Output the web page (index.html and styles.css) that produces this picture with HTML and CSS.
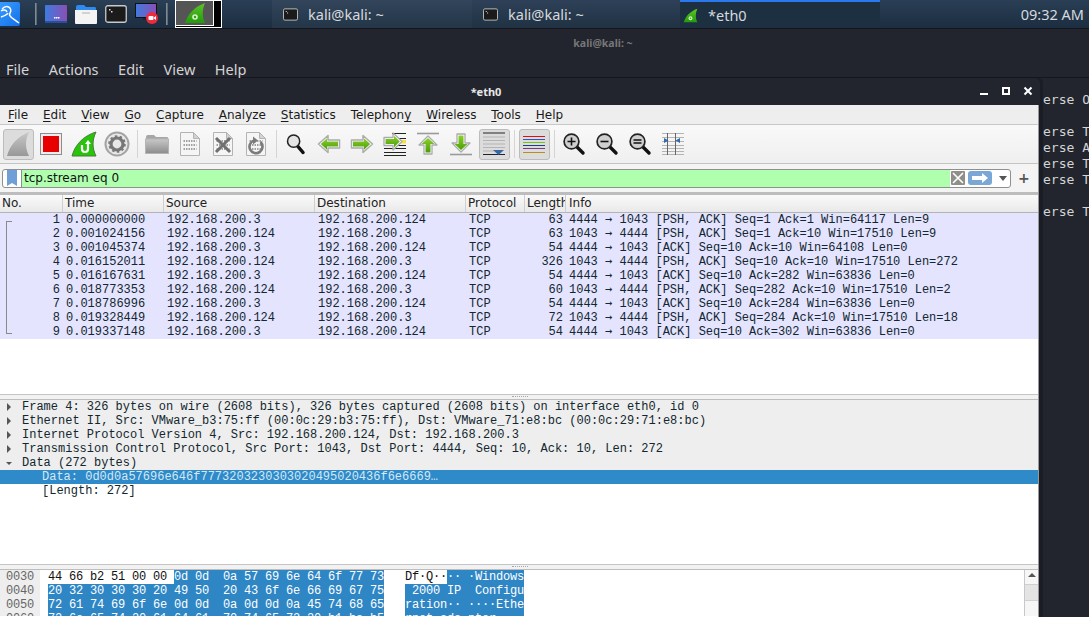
FILE: index.html
```html
<!DOCTYPE html>
<html lang="en">
<head>
    <meta charset="UTF-8">
    <title>*eth0</title>
    <link rel="stylesheet" href="styles.css">
</head>
<body>
<svg class="defs" width="0" height="0">
    <defs>
        <linearGradient id="fin" x1="0" y1="0" x2="0" y2="1"><stop offset="0" stop-color="#c8c8c8"/><stop offset="1" stop-color="#989898"/></linearGradient>
        <linearGradient id="green" x1="0" y1="0" x2="0" y2="1"><stop offset="0" stop-color="#8ed02e"/><stop offset="1" stop-color="#4a9e08"/></linearGradient>
        <linearGradient id="fold" x1="0" y1="0" x2="0" y2="1"><stop offset="0" stop-color="#c8c8c8"/><stop offset="1" stop-color="#8c8c8c"/></linearGradient>
        <linearGradient id="screen" x1="0" y1="0" x2="1" y2="0"><stop offset="0" stop-color="#3f7be0"/><stop offset="1" stop-color="#8a4fb5"/></linearGradient>
        <linearGradient id="kali" x1="0" y1="0" x2="1" y2="1"><stop offset="0" stop-color="#3aa0ff"/><stop offset="1" stop-color="#1470e8"/></linearGradient>
        <linearGradient id="wsgreen" x1="0" y1="0" x2="0" y2="1"><stop offset="0" stop-color="#5cc62a"/><stop offset="1" stop-color="#239a0a"/></linearGradient>
        <symbol id="arrow" viewBox="0 0 24 20"><path d="M1.500 10 11 1.500V6h11.500v8H11v4.500z" fill="#fff" stroke="#ababab" stroke-width="1.500" stroke-linejoin="round"/><path d="M3.800 10 10 4.300V7.500h11v5H10v3.200z" fill="url(#green)"/></symbol>
        <symbol id="lens" viewBox="0 0 24 24"><path d="M14 14 21 21" stroke="#111" stroke-width="3.400" stroke-linecap="round"/><circle cx="9.500" cy="9.500" r="7.400" fill="#cfcfcf" stroke="#222" stroke-width="1.700"/></symbol>
        <symbol id="page" viewBox="0 0 24 24"><path d="M2.500 .5h13l6 6v17h-19z" fill="#f5f5f5" stroke="#b4b4b4"/><path d="M15.500 .5v6h6z" fill="#d2d2d2" stroke="#b4b4b4"/><path d="M5.500 9h13M5.500 13h13M5.500 17h13" stroke="#a0a0a0" stroke-width="2" stroke-dasharray="1.500 1"/></symbol>
        <symbol id="term" viewBox="0 0 22 18"><rect x=".75" y=".75" width="20.500" height="16.500" rx="2" fill="#1b1b1b" stroke="#c9c9c9" stroke-width="1.300"/><path d="M4 4h1.500v1.500H4zM6 6h1.500v1.500H6z" fill="#ddd"/></symbol>
        <symbol id="wsfin" viewBox="0 0 22 22"><path d="M1 21C4 12 10 5 21 1c-3 7-3 14 0 20z" fill="url(#wsgreen)"/><circle cx="11" cy="15" r="2.800" fill="#d5f2c8"/><circle cx="11" cy="15" r="1.200" fill="#3d9a1c"/></symbol>
    </defs>
</svg>

<div class="desktop">
    <div class="taskbar">
        <div class="launchers">
            <svg class="kali" width="20" height="24" viewBox="0 0 20 24"><rect x="-4" y="0" width="24" height="24" rx="2" fill="url(#kali)"/><path d="M2 7C7 2 13 6 10 11 8 14 12 16 19 21M1 9c3-2 5-1 6 1M1 15c3-1 6-2 7-4" fill="none" stroke="#fff" stroke-width="1.500"/></svg>
            <span class="launch-sep"></span>
            <svg class="launcher" width="22" height="18" viewBox="0 0 22 18"><rect width="22" height="18" rx="1" fill="url(#screen)"/><rect y="16" width="22" height="2" fill="#2b4e9a"/><path d="M9 12h1.500v1.500H9zM11 12h1.500v1.500H11zM13 12h1.500v1.500H13z" fill="#fff"/></svg>
            <svg class="launcher" width="22" height="20" viewBox="0 0 22 20"><path d="M1 3q0-2 2-2h6l2 2h9q1 0 1 2v3H1z" fill="#2f8af0"/><path d="M0 6h22v13q0 1-1 1H1q-1 0-1-1z" fill="#f4f4f4"/><path d="M7 9h8" stroke="#bbb" stroke-width="1.200"/></svg>
            <svg class="launcher" width="22" height="18"><use href="#term"/></svg>
            <svg class="launcher" width="24" height="22" viewBox="0 0 24 22"><rect x=".5" y=".5" width="21" height="14" fill="url(#screen)" stroke="#111"/><path d="M8 15h6v2H8z" fill="#222"/><circle cx="17" cy="15" r="6" fill="#ee2b3c"/><rect x="13.500" y="13" width="5" height="4" rx="1" fill="#fff"/><path d="M19 14.500 21 13v4l-2-1.500z" fill="#fff"/></svg>
            <span class="launch-sep"></span>
        </div>
        <div class="preview"><div class="preview-thumb"><svg width="22" height="22"><use href="#wsfin"/></svg></div></div>
        <div class="task task-first"><svg width="15" height="13"><use href="#term"/></svg>kali@kali: ~</div>
        <div class="task task-second"><svg width="15" height="13"><use href="#term"/></svg>kali@kali: ~</div>
        <div class="task task-active"><svg width="15" height="17"><use href="#wsfin"/></svg>*eth0</div>
        <div class="clock">09:32 AM</div>
    </div>

    <div class="terminal">
        <div class="term-title">kali@kali: ~</div>
        <div class="term-menu"><span>File</span><span>Actions</span><span>Edit</span><span>View</span><span>Help</span></div>
        <pre class="term-output">erse O

erse T
erse A
erse T
erse T

erse T</pre>
    </div>

    <div class="wireshark">
        <div class="ws-title">
            <span class="ws-title-text">*eth0</span>
            <div class="ws-controls">
                <svg width="10" height="10" viewBox="0 0 10 10"><rect x="1" y="7" width="8" height="2" fill="#fff"/></svg>
                <svg width="10" height="10" viewBox="0 0 10 10"><rect x="2" y="2" width="6" height="6" fill="none" stroke="#fff" stroke-width="2"/></svg>
                <svg width="10" height="10" viewBox="0 0 10 10"><path d="M1.500 1.500 8.500 8.500M8.500 1.500 1.500 8.500" stroke="#fff" stroke-width="2"/></svg>
            </div>
        </div>
        <div class="ws-body">
            <div class="menubar">
                <span><u>F</u>ile</span><span><u>E</u>dit</span><span><u>V</u>iew</span><span><u>G</u>o</span><span><u>C</u>apture</span><span><u>A</u>nalyze</span><span><u>S</u>tatistics</span><span>Telephon<u>y</u></span><span><u>W</u>ireless</span><span><u>T</u>ools</span><span><u>H</u>elp</span>
            </div>

            <div class="toolbar">
                <span class="tool tool-on"><svg width="24" height="26" viewBox="0 0 24 26"><path d="M1 25C4 14 11 6 23 1c-4 8-4 16 0 24z" fill="url(#fin)"/></svg></span>
                <span class="tool"><svg width="22" height="22" viewBox="0 0 22 22"><rect x=".5" y=".5" width="21" height="21" fill="#eee" stroke="#8c8c8c"/><rect x="3" y="3" width="16" height="16" fill="#e60000"/></svg></span>
                <span class="tool"><svg width="26" height="26" viewBox="0 0 26 26"><path d="M1 25C4 14 12 5 25 1c-4 8-4 16 0 24z" fill="#27c40a" stroke="#4b7a3c"/><path d="M11 14v4q0 3 3 3t3-3v-6" fill="none" stroke="#fff" stroke-width="2.200"/><path d="M14 13l3-4 3 4z" fill="#fff"/></svg></span>
                <span class="tool"><svg width="26" height="26" viewBox="0 0 26 26"><circle cx="13" cy="13" r="11.500" fill="#e8e8e8" stroke="#a4a4a4" stroke-width="2"/><circle cx="13" cy="13" r="6" fill="none" stroke="#777" stroke-width="3.200"/><circle cx="13" cy="13" r="7.800" fill="none" stroke="#777" stroke-width="2" stroke-dasharray="2.500 2.400"/></svg></span>
                <span class="tool-sep"></span>
                <span class="tool"><svg width="24" height="20" viewBox="0 0 24 20"><path d="M1 3q0-2 2-2h6l2 2h11q1 0 1 1v2H1z" fill="#a6a6a6"/><rect x=".5" y="5" width="23" height="14.500" fill="url(#fold)" stroke="#b5b5b5"/></svg></span>
                <span class="tool"><svg width="24" height="24"><use href="#page"/></svg></span>
                <span class="tool"><svg width="24" height="24" viewBox="0 0 24 24"><use href="#page" width="24" height="24"/><path d="M5 6 19 20M19 6 5 20" stroke="#707070" stroke-width="3"/></svg></span>
                <span class="tool"><svg width="24" height="24" viewBox="0 0 24 24"><use href="#page" width="24" height="24"/><path d="M16.500 10A6.500 6.500 0 1 1 10 8.500" fill="none" stroke="#7b7b7b" stroke-width="2.600"/><path d="M9 4.500 14 8.500 9 12.500z" fill="#7b7b7b"/></svg></span>
                <span class="tool-sep"></span>
                <span class="tool"><svg width="20" height="22" viewBox="0 0 21 22"><path d="M12 13 18 20" stroke="#111" stroke-width="3.400" stroke-linecap="round"/><circle cx="8" cy="8" r="6.400" fill="#e4e4e4" stroke="#222" stroke-width="1.600"/></svg></span>
                <span class="tool"><svg width="24" height="20"><use href="#arrow"/></svg></span>
                <span class="tool"><svg class="flip" width="24" height="20"><use href="#arrow"/></svg></span>
                <span class="tool"><svg width="24" height="24" viewBox="0 0 24 24"><path d="M9 1.500h14M16 6.500h7M1 16.500h22M1 20.500h22M1 23.500h22M12 13.500h11" stroke="#222"/><path d="M14 8h9v3.500h-9z" fill="#f2e24a"/><path d="M19 9.500 10 1v4.500H1v8h9V18z" fill="#fff" stroke="#ababab" stroke-width="1.300" stroke-linejoin="round"/><path d="M16.800 9.500 11 3.800v3.200H2.500v5H11v3.200z" fill="url(#green)"/></svg></span>
                <span class="tool"><svg width="24" height="24" viewBox="0 0 24 24"><path d="M1 1.500h22" stroke="#9a9a9a" stroke-width="1.600"/><path d="M12 4 21 13h-5v9H8v-9H3z" fill="#fff" stroke="#ababab" stroke-width="1.300" stroke-linejoin="round"/><path d="M12 6 18.500 12H14.500v8.500h-5V12H5.500z" fill="url(#green)"/></svg></span>
                <span class="tool"><svg width="24" height="24" viewBox="0 0 24 24"><path d="M1 22.500h22" stroke="#9a9a9a" stroke-width="1.600"/><path d="M12 20 3 11h5V2h8v9h5z" fill="#fff" stroke="#ababab" stroke-width="1.300" stroke-linejoin="round"/><path d="M12 18 5.500 12H9.500V3.500h5V12H18.500z" fill="url(#green)"/></svg></span>
                <span class="tool tool-on"><svg width="24" height="24" viewBox="0 0 24 24"><path d="M1 1h22M1 22.500h22" stroke="#222" stroke-width="1.200"/><path d="M1 5h22M1 8.500h22M1 12h22M1 15.500h22M1 19h11" stroke="#b4b4b4"/><path d="M11 18h11l-5.500 5z" fill="#3667a8"/></svg></span>
                <span class="tool-sep"></span>
                <span class="tool tool-on"><svg width="24" height="24" viewBox="0 0 24 24"><path d="M1 4.500h22" stroke="#e01010"/><path d="M1 7.500h22" stroke="#2a56c8"/><path d="M1 10.500h22" stroke="#70c810"/><path d="M1 13.500h22" stroke="#1d3f8a"/><path d="M1 16.500h22" stroke="#7a3a8a"/><path d="M1 20.500h22" stroke="#b89018"/></svg></span>
                <span class="tool-sep"></span>
                <span class="tool"><svg width="24" height="24" viewBox="0 0 24 24"><use href="#lens" width="24" height="24"/><path d="M5.500 9.500h8M9.500 5.500v8" stroke="#111" stroke-width="1.600"/></svg></span>
                <span class="tool"><svg width="24" height="24" viewBox="0 0 24 24"><use href="#lens" width="24" height="24"/><path d="M5.500 9.500h8" stroke="#111" stroke-width="1.600"/></svg></span>
                <span class="tool"><svg width="24" height="24" viewBox="0 0 24 24"><use href="#lens" width="24" height="24"/><path d="M5.500 8h8M5.500 11h8" stroke="#111" stroke-width="1.600"/></svg></span>
                <span class="tool"><svg width="24" height="24" viewBox="0 0 24 24"><path d="M1 1.500h22M1 5.500h22M1 9.500h22M1 13.500h22M1 16.500h22M1 19.500h22M1 22.500h22" stroke="#b4b4b4"/><path d="M6.500 1v22M14.500 1v22" stroke="#666"/><path d="M3 6 7.500 8.500 3 11zM19 6 14.500 8.500 19 11z" fill="#2f6bb0"/></svg></span>
            </div>

            <div class="filterbar">
                <div class="filter">
                    <span class="filter-mark"><svg width="10" height="16" viewBox="0 0 10 16"><path d="M0 0h10v16L5 13 0 16z" fill="#6f9fd6"/></svg></span>
                    <span class="filter-text">tcp.stream eq 0</span>
                    <span class="filter-clear"><svg width="14" height="14" viewBox="0 0 14 14"><rect width="14" height="14" rx="1" fill="#8f8f8a"/><path d="M2 2 12 12M12 2 2 12" stroke="#fff" stroke-width="1.600"/></svg></span>
                    <span class="filter-go"><svg width="24" height="14" viewBox="0 0 24 14"><rect width="24" height="14" rx="3" fill="#7ba7d7"/><path d="M4 5h10V2l6 5-6 5V9H4z" fill="#fff"/></svg></span>
                    <span class="filter-drop"></span>
                </div>
                <span class="filter-add">+</span>
            </div>

            <div class="pane-gap"></div>

            <div class="packets">
                <div class="col-head">
                    <span class="c-no">No.</span><span class="c-time">Time</span><span class="c-src">Source</span><span class="c-dst">Destination</span><span class="c-proto">Protocol</span><span class="c-len">Length</span><span class="c-info">Info</span>
                </div>
                <div class="rows">
                    <div class="conv-line"></div>
                    <div class="row"><span class="n">1</span><span>0.000000000</span><span>192.168.200.3</span><span>192.168.200.124</span><span>TCP</span><span class="n">63</span><span>4444 <i>→</i> 1043 [PSH, ACK] Seq=1 Ack=1 Win=64117 Len=9</span></div>
                    <div class="row"><span class="n">2</span><span>0.001024156</span><span>192.168.200.124</span><span>192.168.200.3</span><span>TCP</span><span class="n">63</span><span>1043 <i>→</i> 4444 [PSH, ACK] Seq=1 Ack=10 Win=17510 Len=9</span></div>
                    <div class="row"><span class="n">3</span><span>0.001045374</span><span>192.168.200.3</span><span>192.168.200.124</span><span>TCP</span><span class="n">54</span><span>4444 <i>→</i> 1043 [ACK] Seq=10 Ack=10 Win=64108 Len=0</span></div>
                    <div class="row"><span class="n">4</span><span>0.016152011</span><span>192.168.200.124</span><span>192.168.200.3</span><span>TCP</span><span class="n">326</span><span>1043 <i>→</i> 4444 [PSH, ACK] Seq=10 Ack=10 Win=17510 Len=272</span></div>
                    <div class="row"><span class="n">5</span><span>0.016167631</span><span>192.168.200.3</span><span>192.168.200.124</span><span>TCP</span><span class="n">54</span><span>4444 <i>→</i> 1043 [ACK] Seq=10 Ack=282 Win=63836 Len=0</span></div>
                    <div class="row"><span class="n">6</span><span>0.018773353</span><span>192.168.200.124</span><span>192.168.200.3</span><span>TCP</span><span class="n">60</span><span>1043 <i>→</i> 4444 [PSH, ACK] Seq=282 Ack=10 Win=17510 Len=2</span></div>
                    <div class="row"><span class="n">7</span><span>0.018786996</span><span>192.168.200.3</span><span>192.168.200.124</span><span>TCP</span><span class="n">54</span><span>4444 <i>→</i> 1043 [ACK] Seq=10 Ack=284 Win=63836 Len=0</span></div>
                    <div class="row"><span class="n">8</span><span>0.019328449</span><span>192.168.200.124</span><span>192.168.200.3</span><span>TCP</span><span class="n">72</span><span>1043 <i>→</i> 4444 [PSH, ACK] Seq=284 Ack=10 Win=17510 Len=18</span></div>
                    <div class="row"><span class="n">9</span><span>0.019337148</span><span>192.168.200.3</span><span>192.168.200.124</span><span>TCP</span><span class="n">54</span><span>4444 <i>→</i> 1043 [ACK] Seq=10 Ack=302 Win=63836 Len=0</span></div>
                </div>
            </div>

            <div class="splitter"></div>

            <div class="details">
                <div class="tree"><i class="arrow-right"></i>Frame 4: 326 bytes on wire (2608 bits), 326 bytes captured (2608 bits) on interface eth0, id 0</div>
                <div class="tree"><i class="arrow-right"></i>Ethernet II, Src: VMware_b3:75:ff (00:0c:29:b3:75:ff), Dst: VMware_71:e8:bc (00:0c:29:71:e8:bc)</div>
                <div class="tree"><i class="arrow-right"></i>Internet Protocol Version 4, Src: 192.168.200.124, Dst: 192.168.200.3</div>
                <div class="tree"><i class="arrow-right"></i>Transmission Control Protocol, Src Port: 1043, Dst Port: 4444, Seq: 10, Ack: 10, Len: 272</div>
                <div class="tree"><i class="arrow-down"></i>Data (272 bytes)</div>
                <div class="leaf leaf-selected">Data: 0d0d0a57696e646f7773203230303020495020436f6e6669…</div>
                <div class="leaf">[Length: 272]</div>
            </div>

            <div class="splitter"></div>

            <div class="bytes">
                <pre class="offsets">0030
0040
0050
0060</pre>
                <pre class="hex">44 66 b2 51 00 00 <b>0d 0d  0a 57 69 6e 64 6f 77 73</b>
<b>20 32 30 30 30 20 49 50  20 43 6f 6e 66 69 67 75</b>
<b>72 61 74 69 6f 6e 0d 0d  0a 0d 0d 0a 45 74 68 65</b>
<b>72 6e 65 74 20 61 64 61  70 74 65 72 20 b1 ba b5</b></pre>
                <pre class="ascii">Df·Q··<b>·· ·Windows</b>
<b> 2000 IP  Configu</b>
<b>ration·· ····Ethe</b>
<b>rnet ada pter ···</b></pre>
                <div class="scrollbar"><div class="scroll-up"></div><div class="scroll-thumb"></div></div>
            </div>
        </div>
    </div>
</div>
</body>
</html>
```

FILE: styles.css
```css
html, body {
    margin: 0;
    height: 100%;
    overflow: hidden;
    background: #22252e;
}
.defs {
    position: absolute;
}
svg {
    display: block;
    flex: none;
}
.desktop {
    position: relative;
    width: 1089px;
    height: 617px;
    overflow: hidden;
    font-family: "DejaVu Sans", sans-serif;
}

/* panel */
.taskbar {
    display: flex;
    height: 28px;
    background: linear-gradient(#2a3e55, #1c2e40);
    border-bottom: 1px solid #14161c;
    font-family: "Noto Sans", sans-serif;
    font-size: 14.500px;
    color: #d6d9dd;
}
.launchers {
    display: flex;
    align-items: center;
    width: 175px;
}
.kali {
    margin-right: 15px;
}
.launcher {
    margin-left: 8px;
}
.launch-sep {
    width: 1px;
    height: 22px;
    margin-left: 7px;
    background: #7f8a94;
    border-right: 1px solid #5f6a75;
}
.launch-sep:first-of-type {
    margin-left: 0;
}
.preview {
    box-sizing: border-box;
    width: 47px;
    margin-right: 50px;
    background: #000;
    border: 1px solid #fff;
}
.preview-thumb {
    display: flex;
    align-items: center;
    justify-content: center;
    width: 37px;
    height: 24px;
    background: #555;
    border-right: 1px solid #fff;
    border-bottom: 1px solid #fff;
}
.task {
    display: flex;
    align-items: center;
    gap: 10px;
    box-sizing: border-box;
    width: 200px;
    padding-left: 11px;
}
.task-first {
    background: rgba(255, 255, 255, 0.04);
}
.task-second {
    width: 208px;
    background: rgba(255, 255, 255, 0.02);
}
.task-active {
    padding-left: 3px;
    background: #1c3042;
    border-top: 2px solid #2a78ee;
}
.clock {
    margin-left: auto;
    padding-right: 5px;
    line-height: 28px;
}

/* terminal behind */
.terminal {
    color: #d4d4d4;
}
.term-title {
    height: 28px;
    padding-left: 117px;
    line-height: 28px;
    text-align: center;
    font-family: "Noto Sans", sans-serif;
    font-size: 10.500px;
    font-weight: bold;
    color: #777;
}
.term-menu {
    display: flex;
    gap: 19.500px;
    height: 15px;
    padding: 5px 0 0 6px;
    font-family: "Noto Sans", sans-serif;
    font-size: 14.500px;
    line-height: 14px;
    border-bottom: 1px solid #14161c;
}
.term-output {
    margin: 0;
    padding: 14px 0 0 1043px;
    font-family: "DejaVu Sans Mono", monospace;
    font-size: 13px;
    line-height: 16px;
    color: #d4d4d4;
}

/* capture window */
.wireshark {
    position: absolute;
    left: 0;
    top: 78px;
    width: 1043px;
    height: 539px;
    box-sizing: border-box;
    padding-right: 4px;
    background: #1b1d25;
    border-top-right-radius: 5px;
}
.ws-title {
    position: relative;
    display: flex;
    align-items: center;
    justify-content: center;
    height: 27px;
    margin-right: -1px;
    background: #22252e;
    border-top-right-radius: 5px;
}
.ws-title-text {
    margin-left: -68px;
    font-family: "Noto Sans", sans-serif;
    font-size: 11px;
    font-weight: bold;
    color: #e8e8e8;
}
.ws-controls {
    position: absolute;
    right: 7px;
    top: 8px;
    display: flex;
    gap: 12px;
}
.ws-body {
    width: 1039px;
    height: 512px;
    box-sizing: border-box;
    background: #fff;
    border-right: 1px solid #999;
    font-size: 12px;
    color: #1a1a1a;
}
.menubar {
    display: flex;
    gap: 14.900px;
    height: 19px;
    line-height: 20px;
    padding-left: 8px;
    background: #eeeeee;
    border-bottom: 1px solid #c8c8c8;
}
.menubar u {
    text-underline-offset: 2px;
}
.toolbar {
    display: flex;
    align-items: center;
    height: 38px;
    padding-left: 1.500px;
    background: linear-gradient(#f9f9f9, #efefef);
    border-bottom: 1px solid #c4c4c4;
}
.tool {
    display: flex;
    align-items: center;
    justify-content: center;
    width: 33px;
    height: 31px;
    box-sizing: border-box;
}
.tool-on {
    width: 31px;
    margin: 0 1px;
    background: #dcdcdc;
    border: 1px solid #bcbcbc;
    border-radius: 3px;
}
.tool-sep {
    width: 1px;
    height: 28px;
    margin: 0 3px;
    background: #d4d4d4;
}
.flip {
    transform: scaleX(-1);
}

/* display filter */
.filterbar {
    display: flex;
    align-items: center;
    height: 28px;
    padding-left: 2px;
    background: #f4f4f4;
}
.filter {
    display: flex;
    align-items: center;
    box-sizing: border-box;
    width: 1009px;
    height: 19px;
    background: #fff;
    border: 1px solid #8f8f8f;
    border-radius: 3px;
}
.filter-mark {
    display: flex;
    justify-content: center;
    align-items: center;
    box-sizing: border-box;
    width: 19px;
    height: 17px;
    border-right: 1px solid #8f8f8f;
}
.filter-text {
    flex: 1;
    height: 17px;
    padding-left: 2px;
    background: #afffaf;
    font-size: 12px;
    line-height: 17px;
    color: #111;
}
.filter-clear {
    margin-left: 1px;
}
.filter-go {
    margin-left: 3px;
}
.filter-drop {
    width: 0;
    height: 0;
    margin: 0 3px 0 7px;
    border-left: 4px solid transparent;
    border-right: 4px solid transparent;
    border-top: 5px solid #555;
}
.filter-add {
    margin-left: 7px;
    font-size: 14px;
    font-weight: bold;
    color: #555;
}
.pane-gap {
    height: 3px;
    background: #bdbdbd;
}

/* packet list */
.packets {
    height: 200px;
    box-sizing: border-box;
    background: #fff;
    border-bottom: 1px solid #c4c4c4;
}
.col-head,
.row {
    display: grid;
    grid-template-columns: 63px 101px 151px 151px 59px 41px 1fr;
}
.col-head {
    height: 18px;
    box-sizing: border-box;
    line-height: 17px;
    background: linear-gradient(#fafafa, #e9e9e9);
    border-bottom: 1px solid #b4b4b4;
    color: #222;
}
.col-head span {
    padding-left: 2px;
    border-right: 1px solid #cfcfcf;
    overflow: hidden;
    white-space: nowrap;
}
.col-head .c-info {
    padding-left: 3px;
    border-right: 0;
}
.rows {
    position: relative;
}
.conv-line {
    position: absolute;
    left: 6px;
    top: 8px;
    width: 5px;
    height: 111px;
    border: 1px solid #8a8a8a;
    border-right: 0;
}
.row {
    height: 14px;
    line-height: 14px;
    background: #e4e4ff;
    font-family: "Liberation Mono", monospace;
    font-size: 12px;
    color: #12272e;
    white-space: pre;
}
.row span {
    padding-left: 3px;
}
.row .n {
    padding: 0 3px 0 0;
    text-align: right;
}
.row i {
    font-family: "DejaVu Sans Mono", monospace;
    font-style: normal;
    line-height: 0;
}
.splitter {
    height: 5px;
    padding-top: 1px;
    box-sizing: border-box;
    background: #f2f2f2;
    border-bottom: 1px solid #bdbdbd;
}
.splitter::before {
    content: "";
    display: block;
    width: 16px;
    margin-left: 512px;
    border-top: 1px dotted #a8a8a8;
}

/* packet details */
.details {
    height: 165px;
    box-sizing: border-box;
    background: #fff;
    border-bottom: 1px solid #c4c4c4;
    font-family: "Liberation Mono", monospace;
    font-size: 12px;
    line-height: 14px;
    color: #12272e;
}
.tree {
    display: flex;
    align-items: center;
    height: 14px;
    background: #eeeeee;
}
.arrow-right {
    flex: none;
    width: 0;
    height: 0;
    margin: 0 11px 0 7px;
    border-top: 4px solid transparent;
    border-bottom: 4px solid transparent;
    border-left: 4px solid #555;
}
.arrow-down {
    flex: none;
    width: 0;
    height: 0;
    margin: 0 10px 0 6px;
    border-left: 3px solid transparent;
    border-right: 3px solid transparent;
    border-top: 3px solid #555;
}
.leaf {
    height: 14px;
    padding-left: 42px;
}
.leaf-selected {
    background: #2e8ac8;
    color: #d5e8f5;
}

/* packet bytes */
.bytes {
    display: flex;
    height: 46px;
    overflow: hidden;
    background: #fff;
    font-family: "Liberation Mono", monospace;
    font-size: 12px;
    letter-spacing: -0.2px;
}
.bytes pre {
    margin: 0;
    font: inherit;
    line-height: 14px;
    color: #111;
}
.bytes b {
    font-weight: normal;
    background: #2e86c5;
    color: #fff;
}
.bytes .offsets {
    flex: none;
    width: 34px;
    padding-left: 6px;
    background: #eeeeee;
    color: #666;
}
.hex {
    flex: none;
    width: 357px;
    padding-left: 8px;
}
.ascii {
    flex: 1;
}
.scrollbar {
    width: 13px;
    border-left: 1px solid #c8c8c8;
    background: #f6f6f6;
}
.scroll-up {
    position: relative;
    height: 14px;
}
.scroll-up::after {
    content: "";
    position: absolute;
    left: 3px;
    top: 3px;
    border-left: 4px solid transparent;
    border-right: 4px solid transparent;
    border-bottom: 4px solid #555;
}
.scroll-thumb {
    height: 15px;
    background: #e4e4e4;
    border-top: 1px solid #d0d0d0;
    border-bottom: 1px solid #d0d0d0;
}
```
